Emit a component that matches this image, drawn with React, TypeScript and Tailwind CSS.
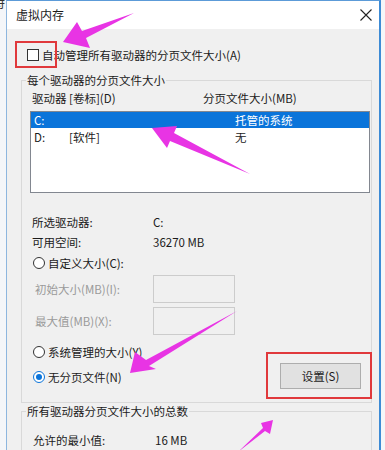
const PINK = '#e834e4';

function Radio({ checked }: { checked?: boolean }) {
  return (
    <span
      className={`flex h-[12px] w-[12px] shrink-0 items-center justify-center rounded-full border bg-white ${
        checked ? 'border-[#0a74da]' : 'border-[#333333]'
      }`}
    >
      {checked && <span className="h-[6px] w-[6px] rounded-full bg-[#0a74da]" />}
    </span>
  );
}

function Arrows() {
  return (
    <svg className="pointer-events-none absolute inset-0" width="385" height="450" viewBox="0 0 385 450">
      {/* to the checkbox */}
      <polygon fill={PINK} points="63,42 77,22 82,31 134,13 86,38 90,48" />
      {/* to drive C */}
      <polygon fill={PINK} points="152,128 177,126 174,133 250,174 170,141 167,148" />
      {/* to no paging file */}
      <polygon fill={PINK} points="130,373 135,352 146,360 237,311 149,366 156,369" />
      {/* to the set button */}
      <polygon fill={PINK} points="273,420 270,434 265,431 238,452 263,428 261,423" />
    </svg>
  );
}

export default function App() {
  return (
    <div className="relative h-[450px] w-[385px] overflow-hidden bg-[#f4f6f9] font-['Noto_Sans_CJK_SC',sans-serif] text-[11.5px] leading-[16px] text-[#1b1b1b]">
      <span className="absolute -left-[8px] -top-[6px] text-[13px] text-[#333333]">特</span>

      <div className="ml-[6px] flex h-full w-[375px] flex-col border-t border-r-2 border-l border-t-[#5c9bd8] border-r-[#3d8bd5] border-l-[#8db6df]">
        {/* title bar */}
        <div className="flex h-[28px] shrink-0 items-center justify-between bg-white pr-[7px] pl-[9px]">
          <span className="text-[12px]">虚拟内存</span>
          <svg width="12" height="12" viewBox="0 0 12 12">
            <path d="M0.5 0.5 L11.5 11.5 M11.5 0.5 L0.5 11.5" stroke="#222" strokeWidth="1.1" />
          </svg>
        </div>

        <div className="flex-1 bg-[#f0f0f0] pr-[7px] pl-[14px]">
          <div className="mt-[18px] flex h-[16px] items-center gap-[3px] pl-[6px]">
            <span className="h-[12px] w-[12px] border border-[#333333] bg-white" />
            <span>自动管理所有驱动器的分页文件大小(A)</span>
          </div>

          <fieldset className="mt-[9px] border border-[#d9d9d9] pb-[13px]">
            <legend className="ml-[4px] px-[1px]">每个驱动器的分页文件大小</legend>
            <div className="mt-[2px] flex h-[16px] items-center pl-[10px]">
              <span className="w-[171px]">驱动器 [卷标](D)</span>
              <span>分页文件大小(MB)</span>
            </div>
            <div className="mt-[5px] mr-[1px] ml-[8px] h-[82px] border border-[#828790] bg-white">
              <div className="flex h-[16px] items-center bg-[#0a74da] pl-[3px] text-white">
                <span className="w-[201px]">C:</span>
                <span>托管的系统</span>
              </div>
              <div className="flex h-[18px] items-center pl-[3px]">
                <span className="w-[35px]">D:</span>
                <span className="w-[166px]">[软件]</span>
                <span>无</span>
              </div>
            </div>

            <div className="mt-[19px] flex h-[20px] items-center pl-[10px]">
              <span className="w-[121px]">所选驱动器:</span>
              <span>C:</span>
            </div>
            <div className="flex h-[20px] items-center pl-[10px]">
              <span className="w-[121px]">可用空间:</span>
              <span>36270 MB</span>
            </div>
            <div className="mt-[1px] flex h-[20px] items-center gap-[3px] pl-[11px]">
              <Radio />
              <span>自定义大小(C):</span>
            </div>
            <div className="mt-[2px] flex h-[28px] items-center pl-[13px]">
              <span className="w-[118px] text-[#9a9a9a]">初始大小(MB)(I):</span>
              <span className="h-[28px] w-[82px] border border-[#cccccc]" />
            </div>
            <div className="mt-[4px] flex h-[28px] items-center pl-[13px]">
              <span className="w-[118px] text-[#9a9a9a]">最大值(MB)(X):</span>
              <span className="h-[28px] w-[82px] border border-[#cccccc]" />
            </div>

            <div className="flex items-start justify-between">
              <div className="flex flex-col gap-[5px] pt-[7px] pl-[11px]">
                <div className="flex h-[20px] items-center gap-[3px]">
                  <Radio />
                  <span>系统管理的大小(Y)</span>
                </div>
                <div className="flex h-[20px] items-center gap-[3px]">
                  <Radio checked />
                  <span>无分页文件(N)</span>
                </div>
              </div>
              <button className="mt-[28px] mr-[10px] flex h-[26px] w-[81px] items-center justify-center border border-[#adadad] bg-[#e1e1e1]">
                设置(S)
              </button>
            </div>
          </fieldset>

          <fieldset className="border border-[#d9d9d9] pb-[10px]">
            <legend className="ml-[4px] px-[1px]">所有驱动器分页文件大小的总数</legend>
            <div className="mt-[11px] flex h-[20px] items-center pl-[11px]">
              <span className="w-[122px]">允许的最小值:</span>
              <span>16 MB</span>
            </div>
          </fieldset>
        </div>
      </div>

      {/* highlight boxes */}
      <div className="absolute top-[41px] left-[15px] h-[27px] w-[42px] border-2 border-[#e0393c]" />
      <div className="absolute top-[352px] left-[266px] h-[47px] w-[106px] border-2 border-[#e0393c]" />
      <Arrows />
    </div>
  );
}
